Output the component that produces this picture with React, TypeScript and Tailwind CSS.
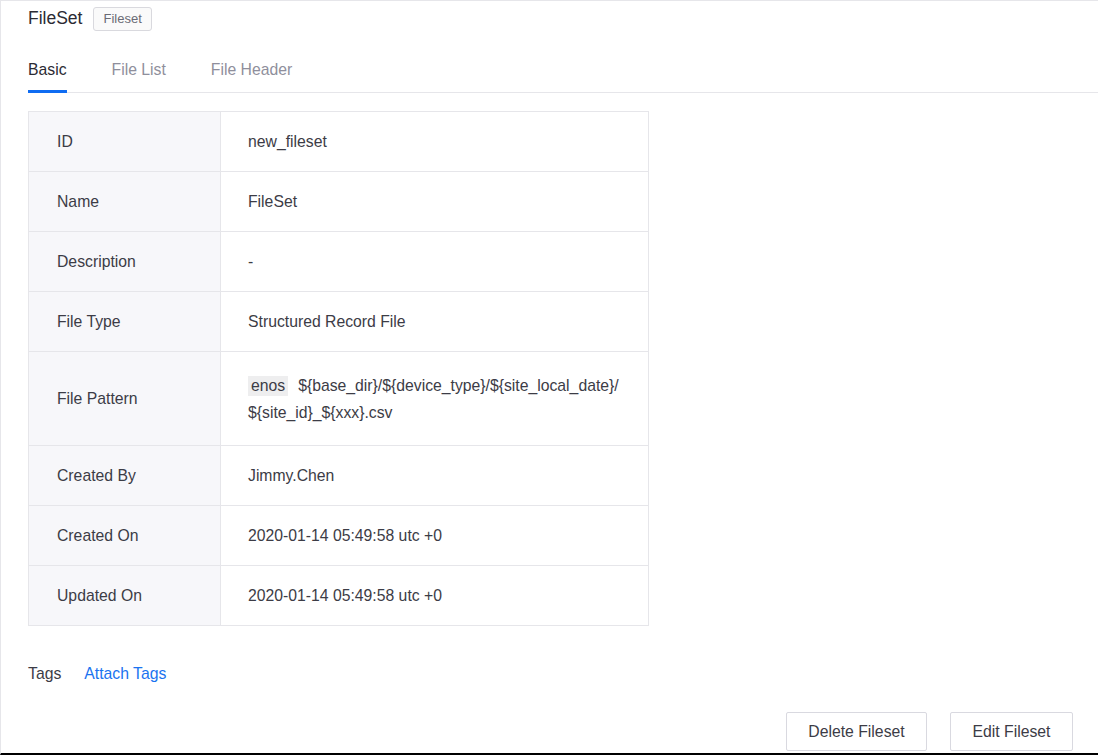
import React from 'react';

const rows: { label: string; value: React.ReactNode; tall?: boolean }[] = [
  { label: 'ID', value: 'new_fileset' },
  { label: 'Name', value: 'FileSet' },
  { label: 'Description', value: '-' },
  { label: 'File Type', value: 'Structured Record File' },
  {
    label: 'File Pattern',
    tall: true,
    value: (
      <div className="leading-[27px]">
        <span className="inline-block bg-[#eeeeef] px-[3px] leading-[20px] mr-[10px]">enos</span>
        {'${base_dir}/${device_type}/${site_local_date}/'}
        <br />
        {'${site_id}_${xxx}.csv'}
      </div>
    ),
  },
  { label: 'Created By', value: 'Jimmy.Chen' },
  { label: 'Created On', value: '2020-01-14 05:49:58 utc +0' },
  { label: 'Updated On', value: '2020-01-14 05:49:58 utc +0' },
];

export default function App() {
  const tabs = ['Basic', 'File List', 'File Header'];

  return (
    <div
      className="h-[755px] border-l border-t border-[#e6e6ea] border-b-2 border-b-black bg-white text-[#3c3c46] text-[15.75px] flex flex-col"
      style={{ fontFamily: '"Liberation Sans", Arial, sans-serif' }}
    >
      {/* Header */}
      <div className="h-[35px] pl-[27px] flex items-center">
        <span className="text-[17.5px] text-[#2b2b33]">FileSet</span>
        <span className="ml-[11px] h-[24px] px-[9px] flex items-center border border-[#d9d9de] rounded-[3px] bg-[#fafafa] text-[13px] text-[#6b6b75]">
          Fileset
        </span>
      </div>

      {/* Tabs */}
      <div className="ml-[27px] flex gap-[45px] border-b border-[#e6e6ea]">
        {tabs.map((t, i) => (
          <div
            key={t}
            className={`pt-[23px] pb-[9px] leading-[22px] border-b-[3px] -mb-px ${
              i === 0 ? 'border-[#0f6cf2] text-[#2b2b33]' : 'border-transparent text-[#8f8f9c]'
            }`}
          >
            {t}
          </div>
        ))}
      </div>

      {/* Details table */}
      <div className="ml-[27px] mt-[18px] w-[621px] border-l border-r border-b border-[#e6e6ea]">
        {rows.map((r) => (
          <div key={r.label} className={`flex border-t border-[#e6e6ea] ${r.tall ? 'h-[94px]' : 'h-[60px]'}`}>
            <div className="w-[192px] shrink-0 bg-[#f7f7fa] border-r border-[#e6e6ea] pl-[28px] flex items-center">
              {r.label}
            </div>
            <div className="flex-1 pl-[27px] flex items-center">{r.value}</div>
          </div>
        ))}
      </div>

      {/* Tags */}
      <div className="ml-[27px] mt-[37px] flex leading-[22px]">
        <span>Tags</span>
        <span className="ml-[23px] text-[#1a73f0] cursor-pointer">Attach Tags</span>
      </div>

      {/* Actions */}
      <div className="mt-[27px] pr-[25px] flex justify-end gap-[23px]">
        <button className="h-[39px] w-[141px] border border-[#d9d9e0] rounded-[2px] bg-white text-[#3c3c46]">
          Delete Fileset
        </button>
        <button className="h-[39px] w-[123px] border border-[#d9d9e0] rounded-[2px] bg-white text-[#3c3c46]">
          Edit Fileset
        </button>
      </div>
    </div>
  );
}
